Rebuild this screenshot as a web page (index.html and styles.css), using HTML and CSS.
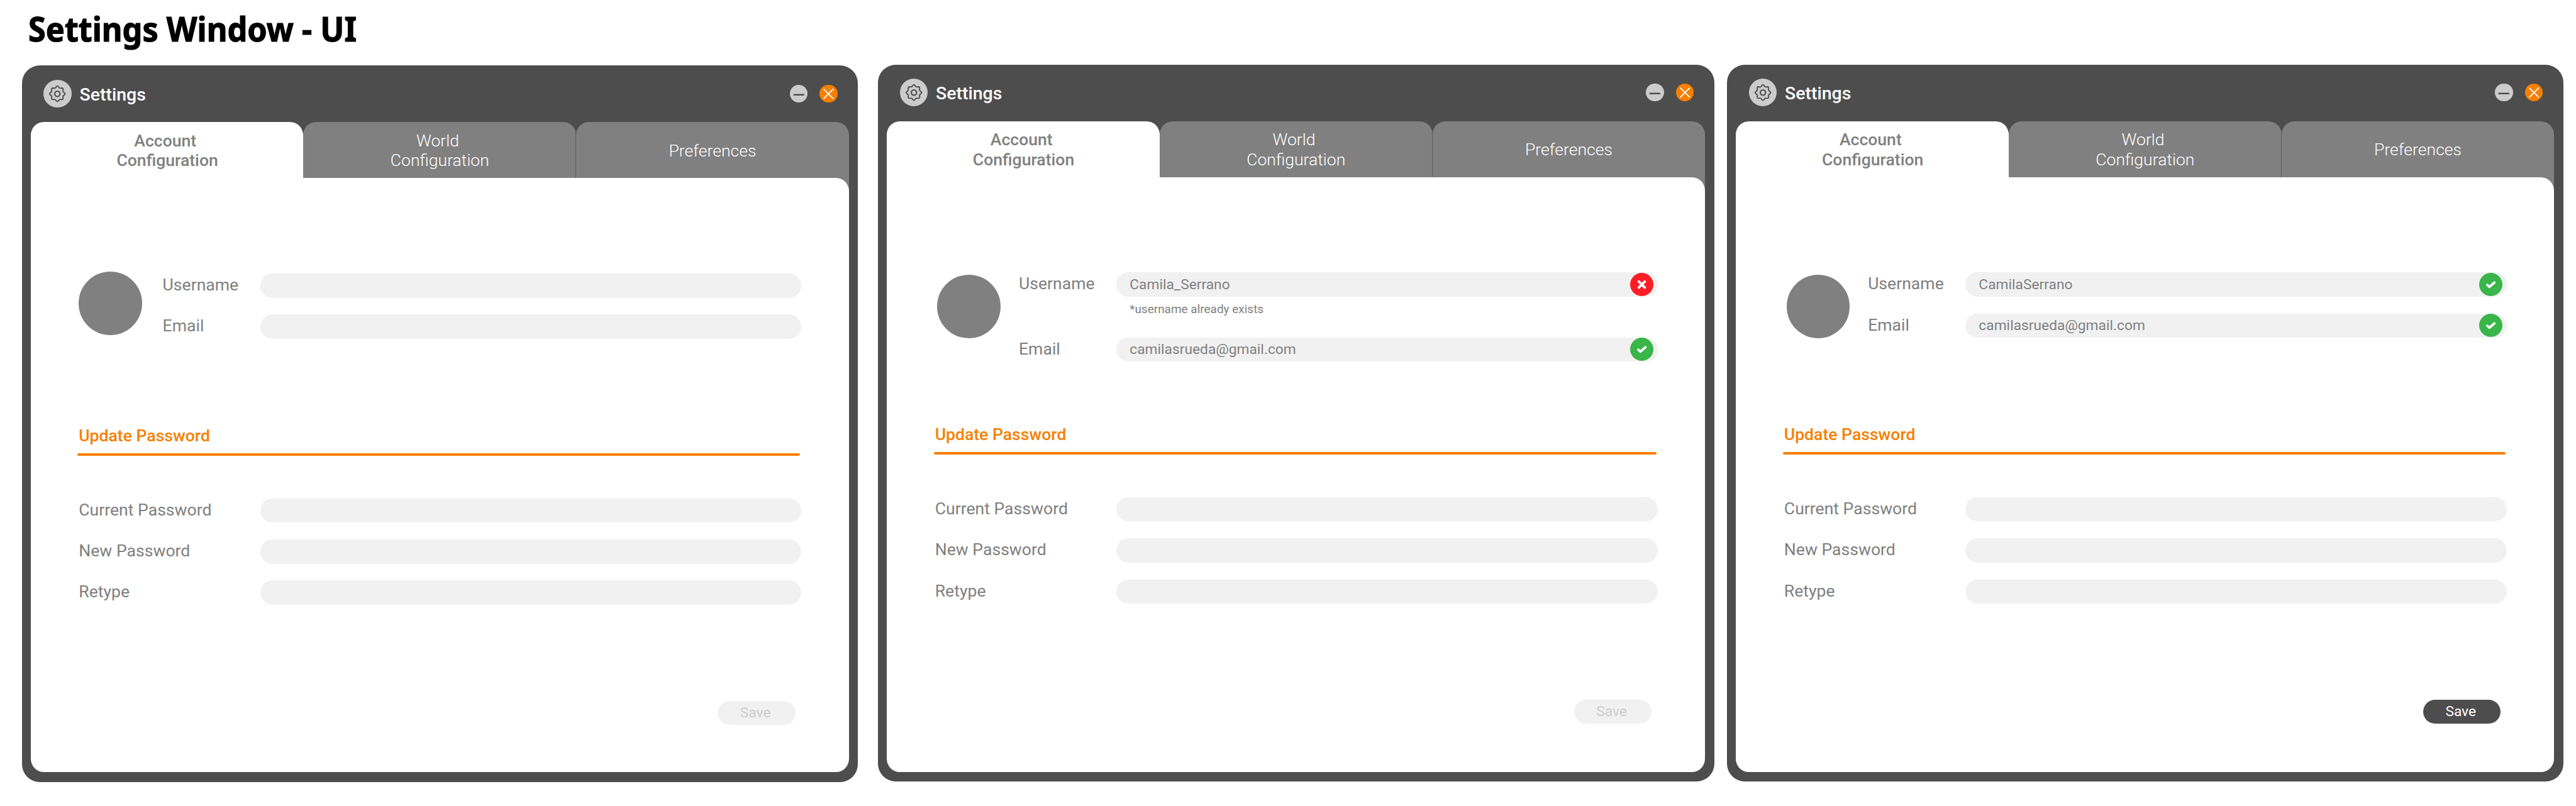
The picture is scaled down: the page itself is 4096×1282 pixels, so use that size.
FILE: index.html
```html
<!DOCTYPE html>
<html lang="en">
<head>
<meta charset="utf-8">
<title>Settings Window - UI</title>
<link rel="stylesheet" href="styles.css">
</head>
<body>
<svg class="sprite" aria-hidden="true">
  <symbol id="gear" viewBox="-23.5 -23.5 47 47">
    <path fill="none" stroke="#4d4d4d" stroke-width="2" stroke-linejoin="round" d="M-3.2-10.1L-1.6-12.1Q0-13.7 1.6-12.1L3.2-10.1Q3.9-9.3 4.9-9.4L7.4-9.7Q9.6-9.6 9.7-7.4L9.4-4.9Q9.3-3.9 10.1-3.2L12.1-1.6Q13.7 0 12.1 1.6L10.1 3.2Q9.3 3.9 9.4 4.9L9.7 7.4Q9.6 9.6 7.4 9.7L4.9 9.4Q3.9 9.3 3.2 10.1L1.6 12.1Q0 13.7-1.6 12.1L-3.2 10.1Q-3.9 9.3-4.9 9.4L-7.4 9.7Q-9.6 9.6-9.7 7.4L-9.4 4.9Q-9.3 3.9-10.1 3.2L-12.1 1.6Q-13.7 0-12.1-1.6L-10.1-3.2Q-9.3-3.9-9.4-4.9L-9.7-7.4Q-9.6-9.6-7.4-9.7L-4.9-9.4Q-3.9-9.3-3.2-10.1Z"/>
    <circle r="4.5" fill="none" stroke="#4d4d4d" stroke-width="2.2"/>
  </symbol>
  <symbol id="minimize" viewBox="0 0 30 30">
    <path d="M7 16.5H23" fill="none" stroke="#4d4d4d" stroke-width="2.6" stroke-linecap="round"/>
  </symbol>
  <symbol id="close" viewBox="0 0 30 30">
    <path d="M7.5 7.5L22.5 22.5M22.5 7.5L7.5 22.5" fill="none" stroke="#fff" stroke-width="2" stroke-linecap="round"/>
  </symbol>
  <symbol id="invalid" viewBox="0 0 39 39">
    <path d="M14.6 14.7L24.5 24.6M24.5 14.7L14.6 24.6" fill="none" stroke="#fff" stroke-width="4.2" stroke-linecap="round"/>
  </symbol>
  <symbol id="valid" viewBox="0 0 39 39">
    <path d="M13.6 20.2L17.3 23.5L25.6 16.1" fill="none" stroke="#fff" stroke-width="4" stroke-linecap="round" stroke-linejoin="round"/>
  </symbol>
</svg>

<h1 class="title"><span class="title-text">Settings Window - UI</span></h1>

<main class="board">
  <section class="window window-empty">
    <header class="bar">
      <svg class="gear"><use href="#gear"/></svg>
      <h2 class="bar-title">Settings</h2>
      <svg class="control minimize"><use href="#minimize"/></svg>
      <svg class="control close"><use href="#close"/></svg>
    </header>
    <nav class="tabs">
      <div class="tab active">Account&nbsp;<br>Configuration</div>
      <div class="tab">World&nbsp;<br>Configuration</div>
      <div class="tab">Preferences</div>
    </nav>
    <div class="panel-wrap">
      <form class="panel">
        <div class="profile">
          <div class="avatar"></div>
          <div class="rows">
            <div class="row"><label class="label">Username</label><div class="field"></div></div>
            <div class="row"><label class="label">Email</label><div class="field"></div></div>
          </div>
        </div>
        <h3 class="subhead">Update Password</h3>
        <div class="rule"></div>
        <div class="passwords">
          <div class="row"><label class="label">Current Password</label><div class="field"></div></div>
          <div class="row"><label class="label">New Password</label><div class="field"></div></div>
          <div class="row"><label class="label">Retype</label><div class="field"></div></div>
        </div>
        <div class="save">Save</div>
      </form>
    </div>
  </section>

  <section class="window window-error">
    <header class="bar">
      <svg class="gear"><use href="#gear"/></svg>
      <h2 class="bar-title">Settings</h2>
      <svg class="control minimize"><use href="#minimize"/></svg>
      <svg class="control close"><use href="#close"/></svg>
    </header>
    <nav class="tabs">
      <div class="tab active">Account&nbsp;<br>Configuration</div>
      <div class="tab">World&nbsp;<br>Configuration</div>
      <div class="tab">Preferences</div>
    </nav>
    <div class="panel-wrap">
      <form class="panel">
        <div class="profile">
          <div class="avatar"></div>
          <div class="rows">
            <div class="row">
              <label class="label">Username</label>
              <div>
                <div class="field">Camila_Serrano<svg class="status bad"><use href="#invalid"/></svg></div>
                <p class="note">*username already exists</p>
              </div>
            </div>
            <div class="row"><label class="label">Email</label><div class="field">camilasrueda@gmail.com<svg class="status good"><use href="#valid"/></svg></div></div>
          </div>
        </div>
        <h3 class="subhead">Update Password</h3>
        <div class="rule"></div>
        <div class="passwords">
          <div class="row"><label class="label">Current Password</label><div class="field"></div></div>
          <div class="row"><label class="label">New Password</label><div class="field"></div></div>
          <div class="row"><label class="label">Retype</label><div class="field"></div></div>
        </div>
        <div class="save">Save</div>
      </form>
    </div>
  </section>

  <section class="window window-valid">
    <header class="bar">
      <svg class="gear"><use href="#gear"/></svg>
      <h2 class="bar-title">Settings</h2>
      <svg class="control minimize"><use href="#minimize"/></svg>
      <svg class="control close"><use href="#close"/></svg>
    </header>
    <nav class="tabs">
      <div class="tab active">Account&nbsp;<br>Configuration</div>
      <div class="tab">World&nbsp;<br>Configuration</div>
      <div class="tab">Preferences</div>
    </nav>
    <div class="panel-wrap">
      <form class="panel">
        <div class="profile">
          <div class="avatar"></div>
          <div class="rows">
            <div class="row"><label class="label">Username</label><div class="field">CamilaSerrano<svg class="status good"><use href="#valid"/></svg></div></div>
            <div class="row"><label class="label">Email</label><div class="field">camilasrueda@gmail.com<svg class="status good"><use href="#valid"/></svg></div></div>
          </div>
        </div>
        <h3 class="subhead">Update Password</h3>
        <div class="rule"></div>
        <div class="passwords">
          <div class="row"><label class="label">Current Password</label><div class="field"></div></div>
          <div class="row"><label class="label">New Password</label><div class="field"></div></div>
          <div class="row"><label class="label">Retype</label><div class="field"></div></div>
        </div>
        <div class="save enabled">Save</div>
      </form>
    </div>
  </section>
</main>
</body>
</html>
```
FILE: styles.css
```css
* {
  box-sizing: border-box;
  margin: 0;
  padding: 0;
}

html {
  font-size: 9.4947px;
}

body {
  background: #fff;
  color: #808080;
  font-family: Roboto, "Liberation Sans", sans-serif;
  overflow: hidden;
}

.sprite {
  display: none;
}

.title {
  height: 10.89rem;
  padding: 1.2rem 0 0 4.7rem;
  color: #000;
  font: 700 5.75rem/7.3rem "Noto Sans", "Open Sans", sans-serif;
}

.title-text {
  display: inline-block;
  transform: scaleX(0.924);
  transform-origin: 0 50%;
  white-space: nowrap;
  -webkit-text-stroke: 1.2px #000;
}

.board {
  display: flex;
  align-items: flex-start;
  padding-left: 3.64rem;
}

/* windows */
.window {
  flex: none;
  width: 140.03rem;
  height: 120.02rem;
  padding: 0 1.5rem;
  border-radius: 3rem;
  background: #4d4d4d;
}

.window-empty {
  --text-shift: 0.26rem;
  --panel-shift: 0.14rem;
  margin-top: 0.06rem;
}

.window-error,
.window-valid {
  --text-shift: 0rem;
  --panel-shift: 0rem;
}

.window-error {
  margin-left: 3.36rem;
}

.window-valid {
  margin-left: 2.17rem;
}

.bar {
  display: flex;
  align-items: center;
  height: 9.44rem;
  padding: 0 1.91rem 0.2rem 2.16rem;
}

.window-empty .bar {
  padding-top: 0.09rem;
  padding-bottom: 0;
}

.gear {
  width: 4.68rem;
  height: 4.68rem;
  border-radius: 50%;
  background: #ccc;
}

.bar-title {
  margin-left: 1.35rem;
  margin-right: auto;
  padding-top: 0.26rem;
  color: #fff;
  font-size: 3rem;
  font-weight: 500;
}

.control {
  width: 3rem;
  height: 3rem;
  border-radius: 50%;
}

.minimize {
  background: #ccc;
}

.close {
  margin-left: 2.01rem;
  background: #f77f00;
}

/* tabs */
.tabs {
  display: grid;
  grid-template-columns: repeat(3, 1fr);
  height: 9.38rem;
}

.tab {
  display: flex;
  align-items: center;
  justify-content: center;
  padding-top: var(--text-shift);
  border-radius: 2.2rem 2.2rem 0 0;
  background: #808080;
  color: #fff;
  font-size: 2.8rem;
  font-weight: 300;
  line-height: 3.27rem;
  text-align: center;
}

.tab:last-child {
  box-shadow: -1px 0 0 #5c5c5c;
}

.tab.active {
  padding-left: 0.1rem;
  background: #fff;
  color: #808080;
  font-weight: 500;
}

/* the grey of the last tab shows behind the panel's rounded corner */
.panel-wrap {
  background: linear-gradient(#808080, #808080) 100% 0 / 4rem 2.2rem no-repeat;
}

.panel {
  height: 99.6rem;
  padding: calc(15.52rem + var(--panel-shift)) 7.96rem 0 7.86rem;
  border-radius: 0 2.2rem 2.2rem 2.2rem;
  background: #fff;
}

.profile {
  display: grid;
  grid-template-columns: 14.13rem 1fr;
  height: 25.6rem;
}

.avatar {
  width: 10.6rem;
  height: 10.6rem;
  margin: 0.81rem 0 0 0.59rem;
  border-radius: 50%;
  background: #808080;
}

.window-empty .avatar {
  margin: 0.07rem 0 0 0.18rem;
}

.rows,
.passwords {
  display: flex;
  flex-direction: column;
  gap: 2.83rem;
}

.rows {
  padding-top: 0.4rem;
}

.row {
  display: grid;
  grid-template-columns: 16.47rem 1fr;
  align-items: start;
}

.label {
  padding-left: 0.11rem;
  font-size: 2.8rem;
  line-height: 3.89rem;
}

.field {
  display: flex;
  align-items: center;
  justify-content: space-between;
  height: 4.05rem;
  padding: 0 0.7rem 0 2.2rem;
  border-radius: 2.03rem;
  background: #f1f1f1;
  font-size: 2.4rem;
}

.status {
  width: 3.9rem;
  height: 3.9rem;
  border-radius: 50%;
}

.bad {
  background: #ff1d25;
}

.good {
  background: #39b54a;
}

.note {
  height: 4.02rem;
  padding-left: 2.2rem;
  font-size: 2rem;
  line-height: 4.3rem;
}

.subhead {
  padding: 0 0 0.9rem 0.19rem;
  color: #f77f00;
  font-size: 2.8rem;
  font-weight: 500;
  line-height: 4rem;
}

.rule {
  height: 0.45rem;
  margin-right: 0.2rem;
  border-radius: 0.22rem;
  background: #f77f00;
}

.passwords {
  padding-top: 7.13rem;
}

.passwords .row {
  grid-template-columns: 30.6rem 1fr;
}

.passwords .label {
  padding-left: 0.2rem;
  line-height: 3.74rem;
}

.save {
  width: 13rem;
  height: 4rem;
  margin: 16.08rem 1rem 0 auto;
  padding-right: 0.4rem;
  border-radius: 2rem;
  background: #f1f1f1;
  color: #ccc;
  font-size: 2.4rem;
  line-height: 4rem;
  text-align: center;
}

.save.enabled {
  background: #4d4d4d;
  color: #fff;
}
```
